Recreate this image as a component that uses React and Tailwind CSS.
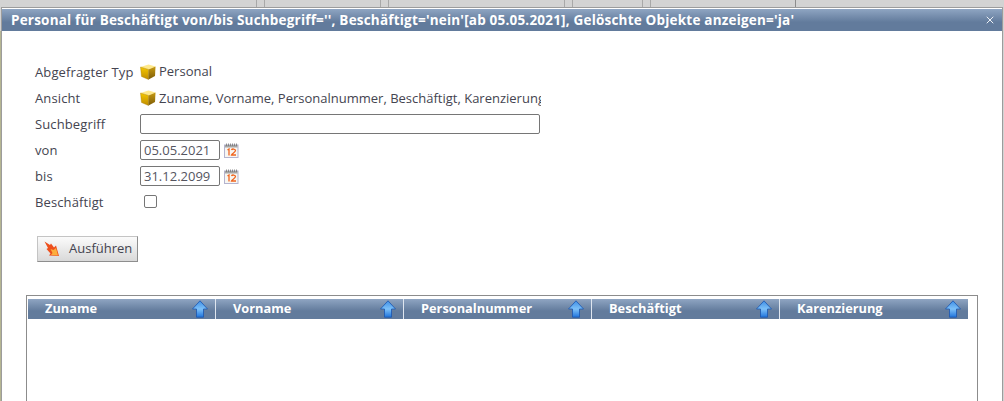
import { X } from "lucide-react";

const FONT = { fontFamily: '"Open Sans", "Liberation Sans", sans-serif' };

function Cube() {
  return (
    <svg width="16" height="16" viewBox="0 0 16 16" className="shrink-0">
      <defs>
        <linearGradient id="cubeLeft" x1="0" y1="0" x2="0" y2="1">
          <stop offset="0" stopColor="#f5c800" />
          <stop offset="1" stopColor="#c08c00" />
        </linearGradient>
        <linearGradient id="cubeRight" x1="0" y1="0" x2="0" y2="1">
          <stop offset="0" stopColor="#c79a10" />
          <stop offset="1" stopColor="#7d5c08" />
        </linearGradient>
      </defs>
      <path d="M0.5 3 L8.5 0.5 L15.5 2.5 L8.5 5.5 Z" fill="#ffe98c" />
      <path d="M0.5 3 L8.5 5.5 L8.5 15.5 L1.5 12.5 Z" fill="url(#cubeLeft)" stroke="#a67c00" strokeWidth="0.4" />
      <path d="M8.5 5.5 L15.5 2.5 L15 12 L8.5 15.5 Z" fill="url(#cubeRight)" />
    </svg>
  );
}

function CalendarIcon() {
  return (
    <svg width="15" height="15" viewBox="0 0 15 15" className="shrink-0">
      <rect x="0.5" y="2" width="13.5" height="12.5" fill="#f7f6f2" stroke="#b4b4cf" />
      <rect x="1" y="2" width="12.5" height="2.5" fill="#a5a5a5" />
      <path d="M2.5 0.5 V3 M4.5 0.5 V3 M6.5 0.5 V3 M8.5 0.5 V3 M10.5 0.5 V3 M12.5 0.5 V3" stroke="#777" strokeWidth="0.8" />
      <path d="M3.5 7 L5 6 V12.5" stroke="#f0641e" strokeWidth="1.3" fill="none" />
      <path d="M7.5 7 C8 5.6 11.5 5.6 11.5 7.6 C11.5 9.2 8 10.4 7.5 12 H12" stroke="#f0641e" strokeWidth="1.3" fill="none" />
    </svg>
  );
}

function RunIcon() {
  return (
    <svg width="16" height="16" viewBox="0 0 16 16" className="shrink-0">
      <path d="M0.5 0.5 L6 4 L7 2.5 L10 6.5 L12 4.5 L15 15 L5 14.5 L6.5 12.5 L2.5 8 L4 7 Z" fill="#ee4f1c" />
      <path d="M6.5 8 L9.5 9 L12 7 L14 14.5 L7 14 L8.5 12 Z" fill="#fcae3c" />
    </svg>
  );
}

function SortArrow() {
  return (
    <svg width="16" height="18" viewBox="0 0 16 18" className="shrink-0">
      <defs>
        <linearGradient id="arrowFill" x1="0" y1="0" x2="0" y2="1">
          <stop offset="0" stopColor="#3f8fe6" />
          <stop offset="0.5" stopColor="#7cc0f8" />
          <stop offset="1" stopColor="#1f74dc" />
        </linearGradient>
      </defs>
      <path d="M8 0.8 L15.5 9 L11.5 9 L11.5 17.2 L4.5 17.2 L4.5 9 L0.5 9 Z" fill="url(#arrowFill)" stroke="#1a55b0" strokeWidth="0.8" />
    </svg>
  );
}

function Row({ label, children }) {
  return (
    <div className="flex items-center h-[26px]">
      <span className="w-[105px] shrink-0 pt-[1px] tracking-[0.12px]">{label}</span>
      {children}
    </div>
  );
}

const COLUMNS = ["Zuname", "Vorname", "Personalnummer", "Beschäftigt", "Karenzierung"];

export default function App() {
  return (
    <div style={FONT} className="relative w-[1004px] h-[401px] overflow-hidden bg-[#d3d3d3] text-[13px] text-[#444450] flex flex-col">
      <div className="absolute left-0 top-[31px] bottom-0 w-[1px] bg-[#b5b592]" />
      <div className="h-[7px] flex shrink-0">
        <div className="w-[257px] border-r border-[#a8a8a8]" />
        <div className="w-[8px] border-r border-[#a8a8a8]" />
        <div className="w-[116px] border-r border-[#a8a8a8]" />
        <div className="w-[8px] border-r border-[#a8a8a8]" />
        <div className="w-[176px] border-r border-[#a8a8a8]" />
        <div className="w-[8px] border-r border-[#a8a8a8]" />
        <div className="w-[70px] border-r border-[#a8a8a8]" />
        <div className="w-[8px] border-r border-[#a8a8a8]" />
        <div className="w-[145px] border-r border-[#8c8c8c]" />
      </div>
      <div className="flex-1 mx-[1px] pt-[1px] bg-white border border-[#9c9c9c] border-b-0 flex flex-col min-h-0">
        <div className="h-[22px] shrink-0 flex items-center justify-between pl-[9px] pr-[6px] bg-gradient-to-b from-[#8fa5c2] to-[#627b9c] to-60% text-white font-bold text-[13.5px]">
          <span className="tracking-[0.2px]">Personal für Beschäftigt von/bis Suchbegriff='', Beschäftigt='nein'[ab 05.05.2021], Gelöschte Objekte anzeigen='ja'</span>
          <X className="w-[12px] h-[12px] text-[#eef2f7]" strokeWidth={2} />
        </div>

        <div className="pt-[28px] pl-[33px] flex flex-col">
          <Row label="Abgefragter Typ">
            <Cube />
            <span className="ml-[3px]">Personal</span>
          </Row>
          <Row label="Ansicht">
            <Cube />
            <span className="ml-[3px] pt-[1px] w-[382px] overflow-hidden whitespace-nowrap">Zuname, Vorname, Personalnummer, Beschäftigt, Karenzierung</span>
          </Row>
          <Row label="Suchbegriff">
            <div className="w-[400px] h-[20px] border border-[#767676] rounded-[2px] bg-white" />
          </Row>
          <Row label="von">
            <div className="w-[80px] h-[20px] border border-[#767676] rounded-[2px] bg-white pl-[3px] leading-[18px] text-[#55555f]">05.05.2021</div>
            <div className="ml-[4px]"><CalendarIcon /></div>
          </Row>
          <Row label="bis">
            <div className="w-[80px] h-[20px] border border-[#767676] rounded-[2px] bg-white pl-[3px] leading-[18px] text-[#55555f]">31.12.2099</div>
            <div className="ml-[4px]"><CalendarIcon /></div>
          </Row>
          <Row label="Beschäftigt">
            <div className="ml-[4px] mt-[-1px] w-[13px] h-[13px] border border-[#767676] rounded-[2px] bg-white" />
          </Row>
          <button className="mt-[21px] ml-[2px] w-[101px] h-[26px] flex items-center pl-[6px] gap-[9px] border border-[#c4c4c4] border-r-[#8e8e8e] border-b-[#8e8e8e] bg-gradient-to-b from-[#fbfbfb] to-[#d9d9d9]">
            <RunIcon />
            <span>Ausführen</span>
          </button>
        </div>

        <div className="mt-[33px] ml-[24px] w-[952px] flex-1 border border-[#8c8c8c] border-b-0 pt-[3px] pl-[1px]">
          <div className="flex w-[940px] h-[20px] bg-gradient-to-b from-[#8fa5c2] to-[#627b9c] to-60% text-white font-bold text-[12.8px]">
            {COLUMNS.map((c, i) => (
              <div key={c} className={`w-[188px] shrink-0 flex items-center justify-between pl-[17px] pr-[7px] ${i < 4 ? "border-r border-[#dfe6ef]" : ""}`}>
                <span>{c}</span>
                <SortArrow />
              </div>
            ))}
          </div>
        </div>
      </div>
    </div>
  );
}
